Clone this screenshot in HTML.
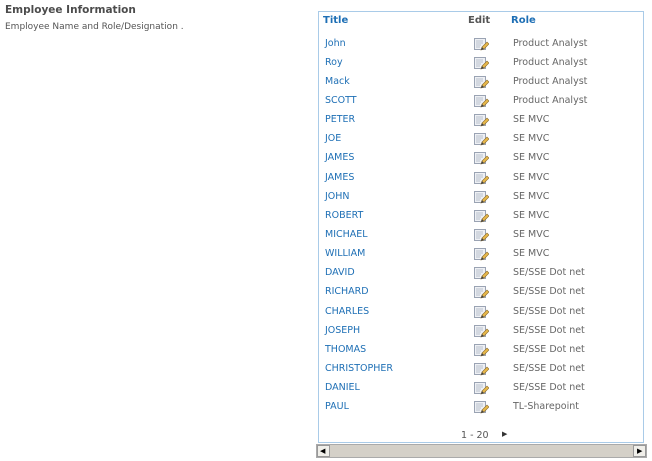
<!DOCTYPE html>
<html><head><meta charset="utf-8"><style>
body{margin:0;width:652px;height:461px;background:#fff;font-family:"DejaVu Sans","Liberation Sans",sans-serif;position:relative;overflow:hidden}
.a{position:absolute;white-space:nowrap}
h1{position:absolute;left:5px;top:4px;margin:0;font-size:10.5px;font-weight:bold;color:#4c4c4c}
.sub{left:5px;top:22px;font-size:9px;color:#555}
.box{position:absolute;left:318px;top:11px;width:326px;height:432px;border:1px solid #a9cbe8;box-sizing:border-box}
.hd{font-size:10px;font-weight:bold;top:15px}
.t{left:325px;font-size:9.5px;color:#1e6fb5}
.r{left:513px;font-size:9.5px;color:#666}
.ic{position:absolute;left:474px;width:15px;height:13px}
.sb{position:absolute;left:316px;top:444px;width:331px;height:14px;background:#d8d4cc;border:1px solid #aaa;box-sizing:border-box}
.btn{position:absolute;top:0;width:13px;height:12px;background:#f0efea;border:1px solid #999;box-sizing:border-box}
</style></head><body>
<h1>Employee Information</h1>
<div class="a sub">Employee Name and Role/Designation .</div>
<div class="box"></div>
<div class="a hd" style="left:323px;color:#1e6fb5">Title</div>
<div class="a hd" style="left:468px;color:#555">Edit</div>
<div class="a hd" style="left:511px;color:#1e6fb5">Role</div>
<div id="rows"></div>
<div class="a" style="left:461px;top:430px;font-size:9.5px;color:#555">1 - 20</div>
<div class="a" style="left:502px;top:430px;font-size:7px;color:#333">&#9654;</div>
<div class="sb"><div class="btn" style="left:0"><span style="position:absolute;left:2px;top:1px;font-size:7px">&#9664;</span></div><div class="btn" style="right:0;background:#f0efea"><span style="position:absolute;left:3px;top:1px;font-size:7px">&#9654;</span></div><div style="position:absolute;left:13px;right:13px;top:0;height:12px;background:#d4d0c8"></div></div>
<script>
var d=[["John","Product Analyst"],["Roy","Product Analyst"],["Mack","Product Analyst"],["SCOTT","Product Analyst"],["PETER","SE MVC"],["JOE","SE MVC"],["JAMES","SE MVC"],["JAMES","SE MVC"],["JOHN","SE MVC"],["ROBERT","SE MVC"],["MICHAEL","SE MVC"],["WILLIAM","SE MVC"],["DAVID","SE/SSE Dot net"],["RICHARD","SE/SSE Dot net"],["CHARLES","SE/SSE Dot net"],["JOSEPH","SE/SSE Dot net"],["THOMAS","SE/SSE Dot net"],["CHRISTOPHER","SE/SSE Dot net"],["DANIEL","SE/SSE Dot net"],["PAUL","TL-Sharepoint"]];
var h="";
d.forEach(function(x,i){var y=Math.round(37.5+i*19.15);
h+='<div class="a t" style="top:'+y+'px">'+x[0]+'</div><div class="a r" style="top:'+y+'px">'+x[1]+'</div>'+
'<svg class="ic" style="top:'+(y)+'px" viewBox="0 0 15 13"><rect x="0.5" y="0.5" width="11" height="11" fill="#eef0f4" stroke="#9aa3b3"/><path d="M2 3h7M2 5h7M2 7h5M2 9h4" stroke="#b8c0cc"/><path d="M7 12l1-3 5-5 2 2-5 5z" fill="#e8b84a" stroke="#8a6a2a" stroke-width="0.6"/><path d="M7 12l1-3 2 2z" fill="#444"/></svg>';});
document.getElementById("rows").innerHTML=h;
</script>
</body></html>
